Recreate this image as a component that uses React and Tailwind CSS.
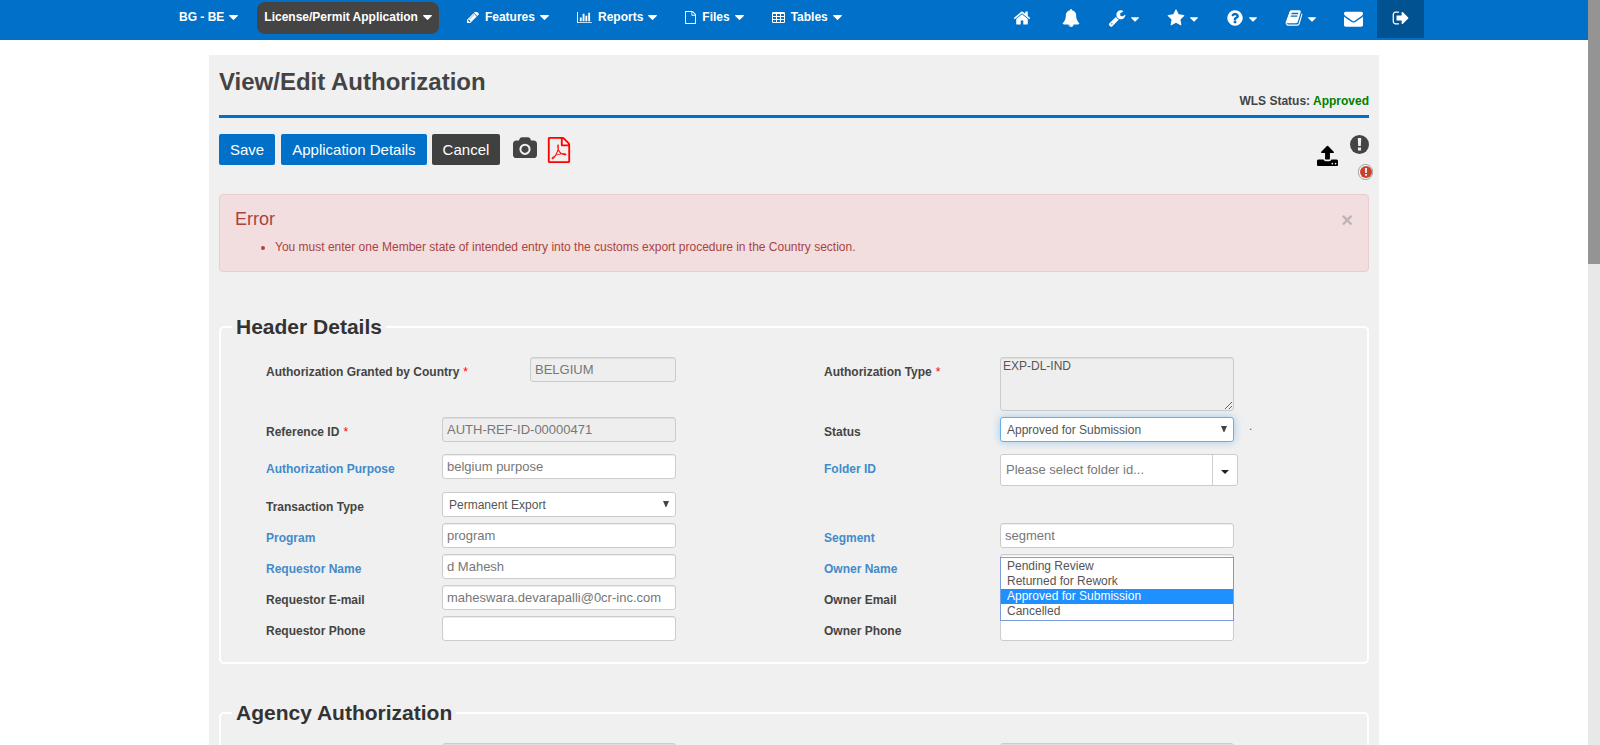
import React from 'react';

const PATHS = {
  home: 'M1472 992v480q0 26-19 45t-45 19h-384v-384h-256v384h-384q-26 0-45-19t-19-45v-480q0-1 .5-3t.5-3l575-474 575 474q1 2 1 6zm223-69l-62 74q-8 9-21 11h-3q-13 0-21-7l-692-577-692 577q-12 8-24 7-13-2-21-11l-62-74q-8-10-7-23.5t11-21.5l719-599q32-26 76-26t76 26l244 204v-195q0-14 9-23t23-9h192q14 0 23 9t9 23v408l219 182q10 8 11 21.5t-7 23.5z',
  bell: 'M912 1696q0-16-16-16-59 0-101.5-42.5t-42.5-101.5q0-16-16-16t-16 16q0 73 51.5 124.5t124.5 51.5q16 0 16-16zm816-288q0 52-38 90t-90 38h-448q0 106-75 181t-181 75-181-75-75-181h-448q-52 0-90-38t-38-90q50-42 91-88t85-119.5 74.5-158.5 50-206 19.5-260q0-152 117-282.5t307-158.5q-8-19-8-39 0-40 28-68t68-28 68 28 28 68q0 20-8 39 190 28 307 158.5t117 282.5q0 139 19.5 260t50 206 74.5 158.5 85 119.5 91 88z',
  wrench: 'M448 1472q0-26-19-45t-45-19-45 19-19 45 19 45 45 19 45-19 19-45zm644-420l-682 682q-37 37-90 37-52 0-91-37l-106-108q-38-36-38-90 0-53 38-91l681-681q39 98 114.5 173.5t173.5 114.5zm634-435q0 39-23 106-47 134-164.5 217.5t-258.5 83.5q-185 0-316.5-131.5t-131.5-316.5 131.5-316.5 316.5-131.5q58 0 121.5 16.5t107.5 46.5q16 11 16 28t-16 28l-293 169v224l193 107q5-3 79-48.5t135.5-81 70.5-35.5q15 0 23.5 10t8.5 25z',
  star: 'M1728 647q0 22-26 48l-363 354 86 500q1 7 1 20 0 21-10.5 35.5t-30.5 14.5q-19 0-40-12l-449-236-449 236q-22 12-40 12-21 0-31.5-14.5t-10.5-35.5q0-6 2-20l86-500-364-354q-25-27-25-48 0-37 56-46l502-73 225-455q19-41 49-41t49 41l225 455 502 73q56 9 56 46z',
  question: 'M1024 1376v-192q0-14-9-23t-23-9h-192q-14 0-23 9t-9 23v192q0 14 9 23t23 9h192q14 0 23-9t9-23zm256-672q0-88-55.5-163t-138.5-116-170-41q-243 0-371 213-15 24 8 42l132 100q7 6 19 6 16 0 25-12 53-68 86-92 34-24 86-24 48 0 85.5 26t37.5 59q0 38-20 61t-68 45q-63 28-115.5 86.5t-52.5 125.5v36q0 14 9 23t23 9h192q14 0 23-9t9-23q0-19 21.5-49.5t54.5-49.5q32-18 49-28.5t46-35 44.5-48 28-60.5 12.5-81zm384 192q0 209-103 385.5t-279.5 279.5-385.5 103-385.5-103-279.5-279.5-103-385.5 103-385.5 279.5-279.5 385.5-103 385.5 103 279.5 279.5 103 385.5z',
  book: 'M1703 478q40 57 18 129l-275 906q-19 64-76.5 107.5t-122.5 43.5h-923q-77 0-148.5-53.5t-99.5-131.5q-24-67-2-127 0-4 3-27t4-37q1-8-3-21.5t-3-19.5q2-11 8-21t16.5-23.5 16.5-23.5q23-38 45-91.5t30-91.5q3-10 .5-30t-.5-28q3-11 17-28t17-23q21-36 42-92t25-90q1-9-2.5-32t.5-28q4-13 22-30.5t22-22.5q19-26 42.5-84.5t27.5-96.5q1-8-3-25.5t-2-26.5q2-8 9-18t18-23 17-21q8-12 16.5-30.5t15-35 16-36 19.5-32 26.5-23.5 36-11.5 47.5 5.5l-1 3q38-9 51-9h761q74 0 114 56t18 130l-274 906q-36 119-71.5 153.5t-128.5 34.5h-869q-27 0-38 15-11 16-1 43 24 70 144 70h923q29 0 56-15.5t35-41.5l300-987q7-22 5-57 38 15 59 43zm-1064 2q-4 13 2 22.5t20 9.5h608q13 0 25.5-9.5t16.5-22.5l21-64q4-13-2-22.5t-20-9.5h-608q-13 0-25.5 9.5t-16.5 22.5zm-83 256q-4 13 2 22.5t20 9.5h608q13 0 25.5-9.5t16.5-22.5l21-64q4-13-2-22.5t-20-9.5h-608q-13 0-25.5 9.5t-16.5 22.5z',
  envelope: 'M1792 710v794q0 66-47 113t-113 47h-1472q-66 0-113-47t-47-113v-794q44 49 101 87 362 246 497 345 57 42 92.5 65.5t94.5 48 110 24.5h2q51 0 110-24.5t94.5-48 92.5-65.5q170-123 498-345 57-39 100-87zm0-294q0 79-49 151t-122 123q-376 261-468 325-10 7-42.5 31t-54 38.5-52 32.5-57.5 27-50 9h-2q-23 0-50-9t-57.5-27-52-32.5-54-38.5-42.5-31q-91-64-262-182.5t-205-142.5q-62-42-117-115.5t-55-136.5q0-78 41.5-130t118.5-52h1472q65 0 112.5 47t47.5 113z',
  signOut: 'M704 1440q0 4 1 20t.5 26.5-3 23.5-10 19.5-20.5 6.5h-320q-119 0-203.5-84.5t-84.5-203.5v-704q0-119 84.5-203.5t203.5-84.5h320q13 0 22.5 9.5t9.5 22.5q0 4 1 20t.5 26.5-3 23.5-10 19.5-20.5 6.5h-320q-66 0-113 47t-47 113v704q0 66 47 113t113 47h312l11.5 1 11.5 3 8 5.5 7 9 2 13.5zm928-544q0 26-19 45l-544 544q-19 19-45 19t-45-19-19-45v-288h-448q-26 0-45-19t-19-45v-384q0-26 19-45t45-19h448v-288q0-26 19-45t45-19 45 19l544 544q19 19 19 45z',
  pencil: 'M491 1536l91-91-235-235-91 91v107h128v128h107zm523-928q0-22-22-22-10 0-17 7l-542 542q-7 7-7 17 0 22 22 22 10 0 17-7l542-542q7-7 7-17zm-54-192l416 416-832 832h-416v-416zm683 96q0 53-37 90l-166 166-416-416 166-165q36-38 90-38 53 0 91 38l235 234q37 39 37 91z',
  barChart: 'M640 896v512h-256v-512h256zm384-512v1024h-256v-1024h256zm1024 1152v128h-2048v-1536h128v1408h1920zm-640-896v768h-256v-768h256zm384-384v1152h-256v-1152h256z',
  file: 'M1596 380q28 28 48 76t20 88v1152q0 40-28 68t-68 28h-1344q-40 0-68-28t-28-68v-1600q0-40 28-68t68-28h896q40 0 88 20t76 48zm-444-244v376h376q-10-29-22-41l-313-313q-12-12-41-22zm384 1528v-1024h-416q-40 0-68-28t-28-68v-416h-768v1536h1280z',
  table: 'M224 128h1344a160 160 0 0 1 160 160v1088a160 160 0 0 1-160 160h-1344a160 160 0 0 1-160-160v-1088a160 160 0 0 1 160-160zM192 384v256h384v-256zM704 384v256h384v-256zM1216 384v256h384v-256zM192 768v256h384v-256zM704 768v256h384v-256zM1216 768v256h384v-256zM192 1152v256h384v-256zM704 1152v256h384v-256zM1216 1152v256h384v-256z',
  camera: 'M960 672q119 0 203.5 84.5t84.5 203.5-84.5 203.5-203.5 84.5-203.5-84.5-84.5-203.5 84.5-203.5 203.5-84.5zm704-416q106 0 181 75t75 181v896q0 106-75 181t-181 75h-1408q-106 0-181-75t-75-181v-896q0-106 75-181t181-75h224l51-136q19-49 69.5-84.5t103.5-35.5h512q53 0 103.5 35.5t69.5 84.5l51 136h224zm-704 1152q185 0 316.5-131.5t131.5-316.5-131.5-316.5-316.5-131.5-316.5 131.5-131.5 316.5 131.5 316.5 316.5 131.5z',
  pdf: 'M1596 380q28 28 48 76t20 88v1152q0 40-28 68t-68 28h-1344q-40 0-68-28t-28-68v-1600q0-40 28-68t68-28h896q40 0 88 20t76 48zm-444-244v376h376q-10-29-22-41l-313-313q-12-12-41-22zm384 1528v-1024h-416q-40 0-68-28t-28-68v-416h-768v1536h1280zm-514-593q33 26 84 56 59-7 117-7 147 0 177 49 16 22 2 52 0 1-1 2l-2 2v1q-6 38-71 38-48 0-115-20t-130-53q-221 24-392 83-153 262-242 262-15 0-28-7l-24-12q-1-1-6-5-10-10-6-36 9-40 56-91.5t132-96.5q14-9 23 6 2 2 2 4 52-85 107-197 68-136 104-262-24-82-30.5-159.5t6.5-127.5q11-40 42-40h22q23 0 35 15 18 21 9 68-2 6-4 8 1 3 1 8v30q-2 123-14 192 55 164 146 238zm-576 411q52-24 137-158-51 40-87.5 84t-49.5 74zm398-920q-15 42-2 132 1-7 7-44 0-3 7-43 1-4 4-8-1-1-1-2t-1-2-1-3q-1-22-13-36 0 1-1 2v2zm-124 661q135-54 284-81-2-1-13-9.5t-16-13.5q-76-67-127-176-27 86-83 197-30 56-45 83zm646-16q-24-24-140-24 76 28 124 28 14 0 18-1 0-1-2-3z',
  upload: 'M1344 1472q0-26-19-45t-45-19-45 19-19 45 19 45 45 19 45-19 19-45zm256 0q0-26-19-45t-45-19-45 19-19 45 19 45 45 19 45-19 19-45zm128-224v320q0 40-28 68t-68 28h-1472q-40 0-68-28t-28-68v-320q0-40 28-68t68-28h427q21 56 70.5 92t110.5 36h256q61 0 110.5-36t70.5-92h427q40 0 68 28t28 68zm-325-648q-17 40-59 40h-256v448q0 26-19 45t-45 19h-256q-26 0-45-19t-19-45v-448h-256q-42 0-59-40-17-39 14-69l448-448q18-19 45-19t45 19l448 448q31 30 14 69z',
  caret: 'M1408 704q0 26-19 45l-448 448q-19 19-45 19t-45-19l-448-448q-19-19-19-45t19-45 45-19h896q26 0 45 19t19 45z',
};

function Icon({ name, className, viewBox = '0 0 1792 1792' }) {
  return (
    <svg viewBox={viewBox} className={className} fill="currentColor" fillRule="evenodd" aria-hidden="true">
      <path d={PATHS[name]} />
    </svg>
  );
}

function Caret() {
  return <Icon name="caret" viewBox="384 640 1024 576" className="h-[5px] w-[9px] shrink-0" />;
}

function Alert({ className }) {
  return (
    <svg viewBox="0 0 20 20" className={className} aria-hidden="true">
      <circle cx="10" cy="10" r="10" fill="currentColor" />
      <path d="M8.2 3.2h3.6l-.4 8.4H8.6zM8.4 13.2h3.2v3.2H8.4z" fill="#f0f0f0" />
    </svg>
  );
}

function MenuButton({ icon, viewBox, iconClass, label, className = '' }) {
  return (
    <button type="button" className={`flex h-8 items-center rounded-lg px-[7px] pb-0.5 text-xs font-bold text-white ${className}`}>
      {icon && <Icon name={icon} viewBox={viewBox} className={`mr-1.5 shrink-0 ${iconClass}`} />}
      <span className="mr-[5px] whitespace-nowrap">{label}</span>
      <Caret />
    </button>
  );
}

function IconButton({ icon, iconClass, label, caret, className = '' }) {
  return (
    <button type="button" aria-label={label} className={`flex h-9 items-center gap-[5px] text-white ${className}`}>
      <Icon name={icon} className={`shrink-0 ${iconClass}`} />
      {caret && (
        <span className="pt-[3px]">
          <Icon name="caret" viewBox="384 640 1024 576" className="h-[5px] w-2 shrink-0" />
        </span>
      )}
    </button>
  );
}

const control = 'h-[25px] rounded-[3px] border border-[#ccc] text-[13px] leading-[17px] text-[#777] shadow-[inset_0_1px_1px_rgba(0,0,0,0.075)] outline-none';

function Field({ id, label, link, required, children, wide }) {
  return (
    <div className="relative flex items-start">
      <label
        htmlFor={id}
        className={`shrink-0 pt-1.5 text-xs leading-[18px] font-bold ${wide ? 'w-[264px]' : 'w-44'} ${link ? 'text-[#428bca]' : 'text-[#444]'}`}
      >
        {label}
        {required && <span className="ml-1 font-normal text-[#f00]">*</span>}
      </label>
      {children}
    </div>
  );
}

function TextField({ id, label, value = '', link, required, disabled, wide }) {
  return (
    <Field id={id} label={label} link={link} required={required} wide={wide}>
      <input
        id={id}
        type="text"
        defaultValue={value}
        readOnly={disabled}
        className={`${control} px-1 ${wide ? 'w-[146px]' : 'w-[234px]'} ${disabled ? 'bg-[#eee]' : 'bg-white'}`}
      />
    </Field>
  );
}

function SelectField({ id, label, value, options, focused, children }) {
  return (
    <Field id={id} label={label}>
      <div className="relative w-[234px]">
        <select
          id={id}
          defaultValue={value}
          className={`h-[25px] w-full appearance-none rounded-[3px] border bg-white px-1.5 text-xs text-[#555] outline-none ${
            focused ? 'border-[#66afe9] shadow-[0_0_8px_rgba(102,175,233,0.6)]' : 'border-[#ccc]'
          }`}
        >
          {options.map((o) => (
            <option key={o}>{o}</option>
          ))}
        </select>
        <svg viewBox="0 0 6 6" className="pointer-events-none absolute top-[9px] right-[7px] h-1.5 w-1.5" aria-hidden="true">
          <path d="M0 0h6L3.4 6h-.8z" fill="#444" />
        </svg>
        {children}
      </div>
      {focused && <span className="pt-[3px] pl-[15px] text-xs leading-3 text-[#a94442]">.</span>}
    </Field>
  );
}

const STATUSES = ['Pending Review', 'Returned for Rework', 'Approved for Submission', 'Cancelled'];

function Section({ title, children, id }) {
  return (
    <fieldset className="mt-[37px] min-w-0 rounded-[5px] border-2 border-white pt-[18px] pr-px pb-[21px] pl-[45px]">
      <legend id={id} className="-ml-[34px] px-1 text-[21px] leading-6 font-bold text-[#333]">{title}</legend>
      <div className="grid grid-cols-2 gap-x-4 gap-y-1.5">{children}</div>
    </fieldset>
  );
}

export default function App() {
  return (
    <div className="flex h-screen overflow-hidden bg-white font-['Liberation_Sans',Arial,sans-serif] text-xs text-[#444]">
      <div className="h-full min-w-0 flex-1 overflow-hidden">
        <nav className="h-10 bg-[#0070c8]">
          <div className="mx-auto flex max-w-[1260px] items-start justify-between pl-2">
            <div className="flex pt-0.5">
              <MenuButton label="BG - BE" className="mr-3" />
              <MenuButton label="License/Permit Application" className="mr-[21px] bg-[#444]" />
              <div className="flex gap-[14px]">
                <MenuButton icon="pencil" viewBox="128 256 1536 1408" iconClass="h-[11px] w-3" label="Features" />
                <MenuButton icon="barChart" viewBox="0 0 2048 1792" iconClass="h-[13px] w-[15px]" label="Reports" />
                <MenuButton icon="file" viewBox="128 0 1536 1792" iconClass="h-[13px] w-[11px]" label="Files" />
                <MenuButton icon="table" viewBox="64 128 1664 1408" iconClass="h-[11px] w-[13px]" label="Tables" />
              </div>
            </div>
            <div className="flex">
              <div className="mr-3.5 flex gap-7">
                <IconButton icon="home" iconClass="h-[18px] w-[18px]" label="Home" className="mr-[3px]" />
                <IconButton icon="bell" iconClass="h-[18px] w-[18px]" label="Alerts" />
                <IconButton icon="wrench" iconClass="h-[18px] w-[18px]" label="Tools" caret />
                <IconButton icon="star" iconClass="h-[18px] w-[18px]" label="Favorites" caret />
                <IconButton icon="question" iconClass="h-[18px] w-[18px]" label="Help" caret />
                <IconButton icon="book" iconClass="h-[18px] w-[18px]" label="Docs" caret />
                <IconButton icon="envelope" iconClass="h-[19px] w-[19px]" label="Mail" />
              </div>
              <button type="button" aria-label="Sign out" className="flex h-[38px] w-[47px] items-center justify-center bg-[#005291] pb-0.5 text-white">
                <Icon name="signOut" className="h-[18px] w-[18px]" />
              </button>
            </div>
          </div>
        </nav>

        <main className="mx-auto mt-[15px] max-w-[1170px] bg-[#f0f0f0] px-2.5 pb-10">
          <div className="flex h-[63px] items-start justify-between border-b-[3px] border-[#0070c8]">
            <h1 className="pt-[11px] text-2xl leading-8 font-bold">View/Edit Authorization</h1>
            <p className="pt-[37px] text-xs leading-[18px] font-bold">
              WLS Status: <span className="text-[#008000]">Approved</span>
            </p>
          </div>

          <div className="mt-4 flex h-[60px] items-start justify-between">
            <div className="flex items-center">
              <button type="button" className="mr-1.5 h-[31px] rounded-[2px] bg-[#0070c8] px-[11px] text-[15px] text-white">Save</button>
              <button type="button" className="mr-[5px] h-[31px] rounded-[2px] bg-[#0070c8] px-[11px] text-[15px] text-white">Application Details</button>
              <button type="button" className="h-[31px] rounded-[2px] bg-[#3f4040] px-[11px] text-[15px] text-white">Cancel</button>
              <button type="button" aria-label="Snapshot" className="ml-[13px] pb-0.5 text-[#444]">
                <Icon name="camera" viewBox="0 0 1920 1792" className="h-[23px] w-6" />
              </button>
              <button type="button" aria-label="PDF" className="ml-2.5 text-[#f00]">
                <Icon name="pdf" viewBox="128 0 1536 1792" className="h-[26px] w-6" />
              </button>
            </div>
            <div className="-mr-1 flex items-start">
              <button type="button" aria-label="Upload" className="mr-3 pt-[11px] text-black">
                <Icon name="upload" viewBox="64 0 1664 1664" className="h-[21px] w-[21px]" />
              </button>
              <div className="flex flex-col items-end gap-2.5 pt-px">
                <Alert className="mr-1 h-[19px] w-[19px] text-[#444]" />
                <span className="flex h-4 w-[15px] items-center justify-center rounded-full border border-[#999] bg-white">
                  <Alert className="h-3 w-3 text-[#c9432c]" />
                </span>
              </div>
            </div>
          </div>

          <div role="alert" className="mb-[43px] flex h-[78px] justify-between rounded-[4px] border border-[#ebccd1] bg-[#f2dede] px-[15px] text-[#a94442]">
            <div>
              <h2 className="pt-3.5 text-[18px] leading-5">Error</h2>
              <ul className="list-disc pt-[9px] pl-10 text-xs leading-[18px]">
                <li>You must enter one Member state of intended entry into the customs export procedure in the Country section.</li>
              </ul>
            </div>
            <button type="button" aria-label="Close" className="h-[21px] pt-[15px] text-[20px] leading-5 font-bold text-[#c2b2b2]">×</button>
          </div>

          <div className="[&>fieldset:first-child]:mt-0">
            <Section title="Header Details" id="header-details">
              <TextField id="country" label="Authorization Granted by Country" value="BELGIUM" required disabled wide />
              <Field id="auth-type" label="Authorization Type" required>
                <textarea
                  id="auth-type"
                  readOnly
                  defaultValue="EXP-DL-IND"
                  className="h-[54px] w-[234px] rounded-[3px] border border-[#ccc] bg-[#eee] px-0.5 text-xs leading-4 text-[#555] shadow-[inset_0_1px_1px_rgba(0,0,0,0.075)] outline-none"
                />
              </Field>

              <div className="h-[31px]">
                <TextField id="reference" label="Reference ID" value="AUTH-REF-ID-00000471" required disabled />
              </div>
              <SelectField id="status" label="Status" value="Approved for Submission" options={STATUSES} focused>
                <ul role="listbox" aria-label="Status options" className="absolute top-[140px] left-0 z-10 w-full border border-[#7a9cd8] bg-white py-px text-xs leading-[15px] text-[#555]">
                  {STATUSES.map((s) => {
                    const selected = s === 'Approved for Submission';
                    return (
                      <li key={s} role="option" aria-selected={selected} className={`px-1.5 ${selected ? 'bg-[#1e90ff] text-white' : ''}`}>
                        {s}
                      </li>
                    );
                  })}
                </ul>
              </SelectField>

              <TextField id="purpose" label="Authorization Purpose" value="belgium purpose" link />
              <Field id="folder" label="Folder ID" link>
                <div className="flex h-8 w-[238px] rounded-[3px] border border-[#ccc] bg-white">
                  <input
                    id="folder"
                    type="text"
                    placeholder="Please select folder id..."
                    className="min-w-0 flex-1 px-[5px] text-[13px] text-[#666] outline-none placeholder:text-[#777]"
                  />
                  <button type="button" aria-label="Open folder list" className="flex w-[25px] items-center justify-center border-l border-[#ccc] pt-[3px]">
                    <svg viewBox="0 0 8 4" className="h-1 w-2" aria-hidden="true">
                      <path d="M0 0h8L4 4z" fill="#222" />
                    </svg>
                  </button>
                </div>
              </Field>

              <SelectField id="transaction" label="Transaction Type" value="Permanent Export" options={['Permanent Export']} />
              <div />
              <TextField id="program" label="Program" value="program" link />
              <TextField id="segment" label="Segment" value="segment" link />
              <TextField id="req-name" label="Requestor Name" value="d Mahesh" link />
              <TextField id="own-name" label="Owner Name" link />
              <TextField id="req-mail" label="Requestor E-mail" value="maheswara.devarapalli@0cr-inc.com" />
              <TextField id="own-mail" label="Owner Email" />
              <TextField id="req-phone" label="Requestor Phone" />
              <TextField id="own-phone" label="Owner Phone" />
            </Section>

            <Section title="Agency Authorization" id="agency">
              <div className="pl-44">
                <input type="text" readOnly aria-labelledby="agency" className={`${control} w-[234px] bg-[#eee]`} />
              </div>
              <div className="pl-44">
                <input type="text" readOnly aria-labelledby="agency" className={`${control} w-[234px] bg-[#eee]`} />
              </div>
            </Section>
          </div>
        </main>
      </div>
      <div aria-hidden="true" className="h-full w-3 shrink-0 bg-[#e8e8e8]">
        <div className="h-[264px] bg-[#949494]" />
      </div>
    </div>
  );
}
